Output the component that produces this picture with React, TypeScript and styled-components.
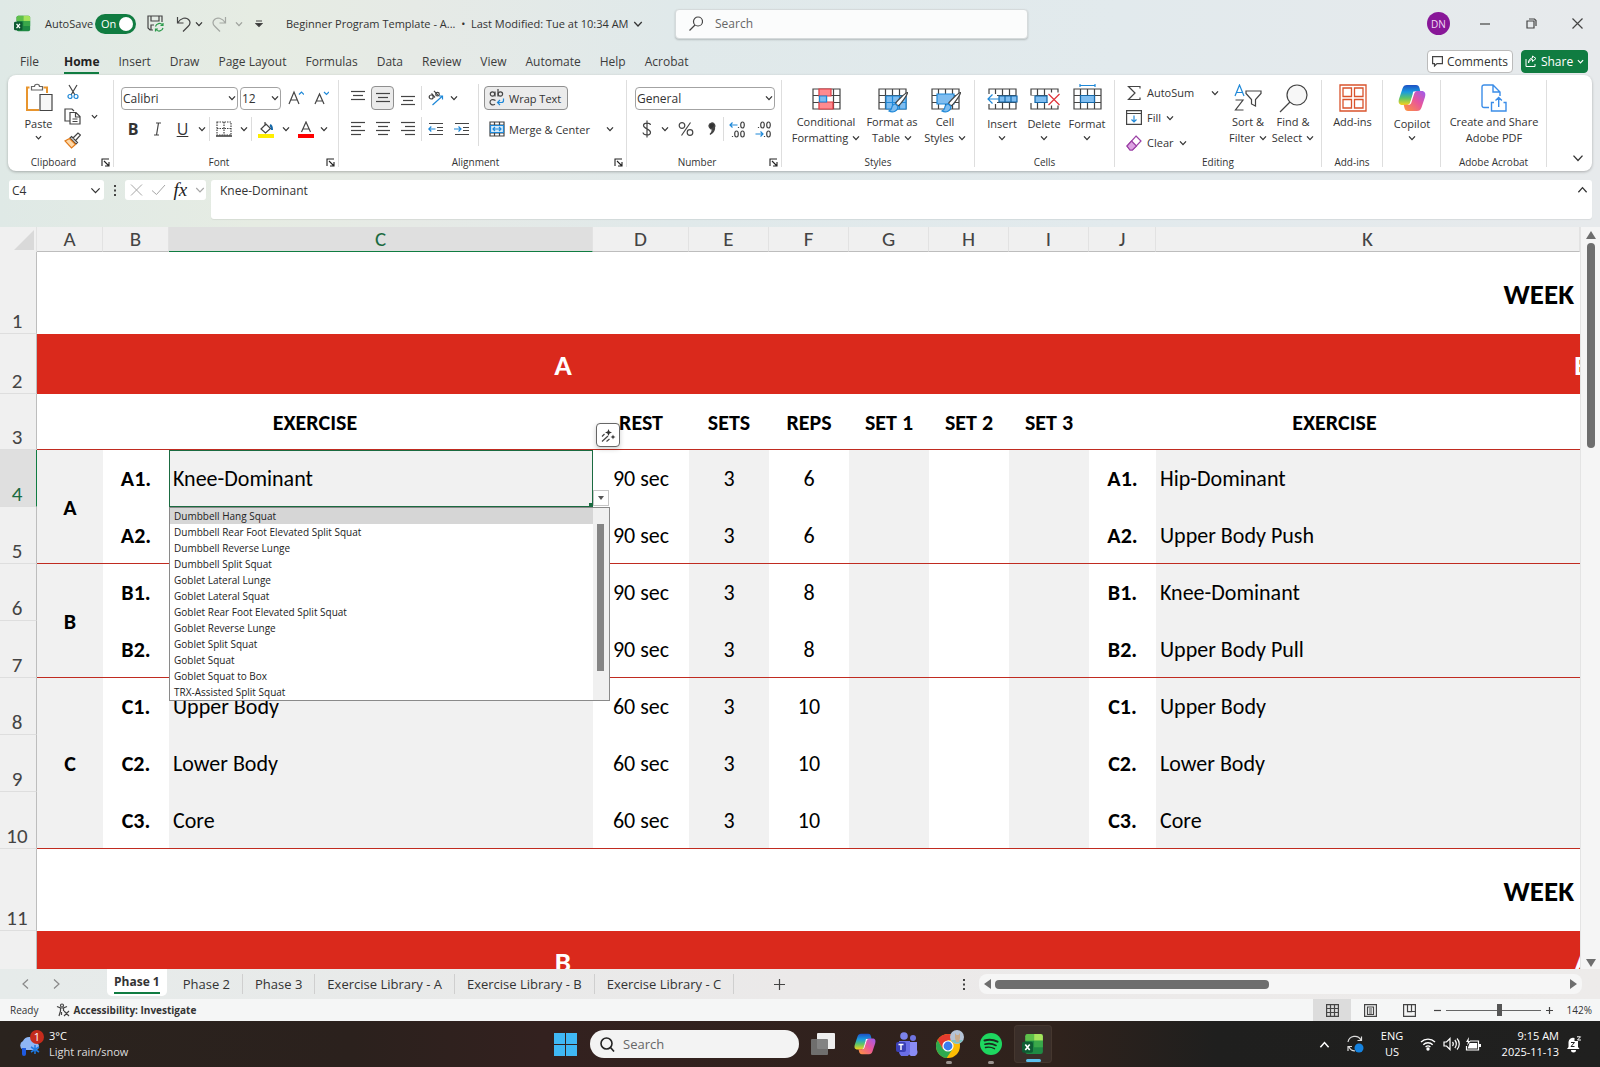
import React from "react";
import styled, { createGlobalStyle, css } from "styled-components";

const ui = `"Open Sans", "Noto Sans", sans-serif`;
const sheet = `"Carlito", "Lato", sans-serif`;
const green = "#107c41";
const ink = "#333";
const blue = "#1e88d8";

const Global = createGlobalStyle`
  * { box-sizing: border-box; }
  body { margin: 0; font-family: ${ui}; color: ${ink}; overflow: hidden; }
  button, input, select { font: inherit; color: inherit; margin: 0; padding: 0; border: 0; background: none; }
  button { cursor: pointer; }
  svg { display: block; flex: none; }
`;

const Page = styled.div`
  display: flex;
  flex-direction: column;
  height: 100vh;
  background: linear-gradient(90deg, #dfe9e6, #e6ece3 16%, #e6eae6 26%, #e0e9ea 42%, #e2eaed 70%, #e7eaec);
`;

/* Shared pieces */

const IconButton = styled.button<{ $w: number; $h?: number; $on?: boolean; $faded?: boolean }>`
  flex: none;
  display: flex;
  align-items: center;
  justify-content: center;
  width: ${(p) => p.$w}px;
  height: ${(p) => p.$h ?? 24}px;
  opacity: ${(p) => (p.$faded ? 0.4 : 1)};
  ${(p) => p.$on && css`
    background: #ebebeb;
    border: 1px solid #8f8f8f;
    border-radius: 4px;
  `}
`;

const Chevron = ({ size = 8, up = false, width = 1.3 }: { size?: number; up?: boolean; width?: number }) => (
  <svg width={size} height={size} viewBox="0 0 8 8" fill="none" stroke="currentColor" strokeWidth={width}>
    <path d={up ? "M1 6 L4 2.6 L7 6" : "M1 2.4 L4 5.6 L7 2.4"} />
  </svg>
);

const Icon = ({ w, h, vb, children }: { w: number; h: number; vb?: string; children: React.ReactNode }) => (
  <svg width={w} height={h} viewBox={vb ?? `0 0 ${w} ${h}`} fill="none" stroke="#444" strokeWidth="1.2">
    {children}
  </svg>
);

const ExcelLogo = ({ size }: { size: number }) => (
  <svg width={size} height={size} viewBox="0 0 20 20">
    <rect x="3" y="1" width="16" height="18" rx="2" fill="#1f8a43" />
    <path d="M5 1h6v6H3V3a2 2 0 0 1 2-2z" fill="#5fc04b" />
    <path d="M11 1h6a2 2 0 0 1 2 2v4h-8z" fill="#a5e35c" />
    <rect x="11" y="7" width="8" height="6" fill="#3aa84a" />
    <rect x="0" y="8" width="10" height="10" rx="1.6" fill="#0e5c33" />
    <path d="M3 10.5l4 5M7 10.5l-4 5" stroke="#fff" strokeWidth="1.5" />
  </svg>
);

const CopilotLogo = ({ size, id }: { size: number; id: string }) => (
  <svg width={size} height={size} viewBox="0 0 28 28">
    <defs>
      <linearGradient id={id + "a"} x1="0" y1="0" x2="0" y2="1">
        <stop offset="0" stopColor="#1d4fc4" />
        <stop offset=".35" stopColor="#1a9be0" />
        <stop offset=".65" stopColor="#5cc46a" />
        <stop offset="1" stopColor="#f7d31c" />
      </linearGradient>
      <linearGradient id={id + "b"} x1="1" y1="0" x2="0" y2="1">
        <stop offset="0" stopColor="#9a5cf0" />
        <stop offset=".45" stopColor="#e8559c" />
        <stop offset="1" stopColor="#ff9838" />
      </linearGradient>
    </defs>
    <path d="M9 1h9c2 0 3 1 3.500 3l.8 3.200h-3.500c-2 0-3 .8-3.600 2.800l-2.700 8.500c-.6 1.800-1.600 2.500-3.400 2.500H4.500C1 21 0 18.500 1 15L4.500 4.500C5.300 2 6.600 1 9 1z" fill={`url(#${id}a)`} />
    <path d="M19 27h-9c-2 0-3-1-3.500-3l-.8-3.200h3.500c2 0 3-.8 3.600-2.800l2.700-8.500c.6-1.800 1.600-2.500 3.400-2.500h4.600c3.500 0 4.500 2.500 3.500 6L23.500 23.500c-.8 2.500-2.100 3.500-4.500 3.500z" fill={`url(#${id}b)`} />
    <path d="M15.500 7.500h3.200c-1.500.2-2.100 1-2.600 2.500l-2.700 8.500c-.5 1.500-1.100 2-2.400 2.200H9.500c1.600-.2 2.200-1 2.700-2.400l2.300-7.500c.4-1.400.2-2.600 1-3.300z" fill="#fff" />
  </svg>
);

/* Title bar */

const TitleBar = styled.header`
  flex: none;
  display: flex;
  align-items: center;
  height: 47px;
  padding: 0 0 0 14px;
  font-size: 12px;
`;
const TitleLeft = styled.div`
  display: flex;
  align-items: center;
  flex: 0 0 661px;
`;
const AutoSave = styled.label`
  display: flex;
  align-items: center;
  justify-content: space-between;
  width: 91px;
  margin: 0 2px 0 14px;
  font-size: 11px;
`;
const Toggle = styled.span`
  position: relative;
  display: flex;
  align-items: center;
  width: 41px;
  height: 20px;
  padding-left: 6px;
  border-radius: 10px;
  background: ${green};
  color: #fff;
  input { position: absolute; inset: 0; opacity: 0; width: 100%; height: 100%; }
  &::after {
    content: "";
    position: absolute;
    right: 3px;
    width: 14px;
    height: 14px;
    border-radius: 50%;
    background: #fff;
  }
`;
const DocTitle = styled.button`
  display: flex;
  align-items: center;
  gap: 4px;
  margin-left: 13px;
  white-space: pre;
  font-size: 11px;
`;
const SearchBox = styled.label`
  display: flex;
  align-items: center;
  gap: 12px;
  flex: 0 1 353px;
  height: 30px;
  padding: 0 13px;
  border: 1px solid #d5dadb;
  border-radius: 4px;
  background: #fbfcfc;
  box-shadow: 0 1px 2px #0003;
  input { flex: 1; min-width: 0; outline: 0; font-size: 12px; }
  input::placeholder { color: #666; opacity: 1; }
`;
const WindowControls = styled.div`
  display: flex;
  align-items: center;
  margin-left: auto;
`;
const Avatar = styled.button`
  width: 23px;
  height: 23px;
  margin-right: 12px;
  border-radius: 50%;
  background: #881798;
  color: #f0d8f4;
  font-size: 10px;
`;

/* Tabs */

const TabBar = styled.nav`
  flex: none;
  display: flex;
  align-items: center;
  height: 28px;
  padding: 0 12px 0 20px;
`;
const Tab = styled.button<{ $active?: boolean }>`
  height: 26px;
  margin-right: 19px;
  padding-top: 2px;
  border-bottom: 2px solid ${(p) => (p.$active ? green : "transparent")};
  font-size: 12px;
  font-weight: ${(p) => (p.$active ? 700 : 400)};
  color: ${(p) => (p.$active ? "#222" : "#3c3c3c")};
  white-space: nowrap;
  &:first-child { margin-right: 25px; }
`;
const PillButton = styled.button<{ $primary?: boolean }>`
  display: flex;
  align-items: center;
  justify-content: center;
  gap: 4px;
  height: 23px;
  width: ${(p) => (p.$primary ? 67 : 86)}px;
  border: 1px solid ${(p) => (p.$primary ? green : "#bbb")};
  border-radius: 4px;
  background: ${(p) => (p.$primary ? green : "#fff")};
  color: ${(p) => (p.$primary ? "#fff" : ink)};
  font-size: 12px;
`;
const TabActions = styled.div`
  display: flex;
  gap: 8px;
  margin-left: auto;
`;

/* Ribbon */

const Ribbon = styled.section`
  flex: none;
  display: flex;
  height: 96px;
  margin: 0 8px;
  border-radius: 8px;
  background: #fff;
  box-shadow: 0 1px 3px #0004;
`;
const Group = styled.div<{ $w: number }>`
  flex: none;
  display: flex;
  flex-direction: column;
  justify-content: space-between;
  width: ${(p) => p.$w}px;
  margin: 5px 0 4px;
  border-right: 1px solid #dedede;
`;
const GroupBody = styled.div<{ $pad?: number }>`
  display: flex;
  height: 68px;
  padding-left: ${(p) => p.$pad ?? 0}px;
`;
const GroupLabel = styled.div<{ $launch?: boolean }>`
  display: grid;
  grid-template-columns: ${(p) => (p.$launch ? "1fr 14px" : "1fr")};
  align-items: center;
  height: 12px;
  font-size: 10px;
  text-align: center;
  white-space: nowrap;
  button { justify-self: end; margin-right: 3px; }
`;
const Stack = styled.div`
  display: flex;
  flex-direction: column;
  padding-top: 6px;
  gap: 7px;
`;
const Tight = styled.div`
  display: flex;
  flex-direction: column;
`;
const Row = styled.div`
  display: flex;
  align-items: center;
  height: 24px;
`;
const Bar = styled.span<{ $tall?: boolean }>`
  flex: none;
  width: 1px;
  height: ${(p) => (p.$tall ? 62 : 24)}px;
  margin: ${(p) => (p.$tall ? "4px 5px 0 4px" : "0")};
  background: #dcdcdc;
`;
const Combo = styled.label<{ $w: number }>`
  flex: none;
  display: grid;
  align-items: center;
  width: ${(p) => p.$w}px;
  height: 23px;
  margin-right: 2px;
  border: 1px solid #a3a3a3;
  border-radius: 4px;
  font-size: 12px;
  select { grid-area: 1 / 1; width: 100%; height: 21px; padding-left: 1px; appearance: none; outline: 0; }
  svg { grid-area: 1 / 1; justify-self: end; margin-right: 1px; pointer-events: none; }
`;
const WideButton = styled.button<{ $on?: boolean }>`
  display: flex;
  align-items: center;
  gap: 4px;
  height: 24px;
  padding: 0 6px 0 4px;
  border: 1px solid ${(p) => (p.$on ? "#8f8f8f" : "transparent")};
  border-radius: 4px;
  background: ${(p) => (p.$on ? "#ebebeb" : "none")};
  font-size: 11px;
  white-space: nowrap;
`;
const BigButton = styled.button<{ $w: number; $drop?: boolean }>`
  flex: none;
  display: flex;
  flex-direction: column;
  align-items: center;
  gap: ${(p) => (p.$drop ? 2 : 0)}px;
  width: ${(p) => p.$w}px;
  padding-top: 3px;
  font-size: 11px;
  line-height: 16px;
  white-space: nowrap;
`;
const BigIcon = styled.span`
  display: grid;
  place-items: center;
  height: 30px;
  margin-bottom: 1px;
`;
const Line = styled.span`
  display: flex;
  align-items: center;
  gap: 4px;
  height: 16px;
`;
const SmallButton = styled.button`
  flex: none;
  display: flex;
  align-items: center;
  gap: 5px;
  width: 112px;
  height: 25px;
  padding-left: 11px;
  font-size: 11px;
`;
const Push = styled.span`
  margin-left: auto;
  margin-right: 8px;
`;
const RibbonEnd = styled.div`
  flex: 1;
  display: flex;
  align-items: flex-end;
  justify-content: flex-end;
  padding: 0 6px 5px 0;
`;

const Launcher = () => (
  <svg width="9" height="9" viewBox="0 0 9 9" fill="none" stroke="#222" strokeWidth="1.1">
    <path d="M1 8V1h7M3 3l5 5M8 4v4H4" />
  </svg>
);

const Label = ({ text, launch }: { text: string; launch?: boolean }) => (
  <GroupLabel $launch={launch}>
    {text}
    {launch && <button aria-label={`${text} settings`}><Launcher /></button>}
  </GroupLabel>
);

const Lines = ({ ys, kind }: { ys: number[]; kind: "l" | "c" | "r" }) => (
  <Icon w={16} h={16}>
    {ys.map((y, i) => {
      const short = i % 2 === 1;
      const x1 = !short || kind === "l" ? 1 : kind === "c" ? 3 : 5;
      const x2 = !short || kind === "r" ? 15 : kind === "c" ? 13 : 11;
      return <path key={y} d={`M${x1} ${y}.5H${x2}`} />;
    })}
  </Icon>
);

const Indent = ({ right }: { right?: boolean }) => (
  <Icon w={16} h={16}>
    <path d="M1 2.500H15M9 6.500H15M9 9.500H15M1 13.500H15" />
    <path stroke={blue} d={right ? "M0 8H7M4.500 5.500L7 8L4.500 10.500" : "M7.500 8H.8M3.300 5.500L.8 8L3.300 10.500"} />
  </Icon>
);

const GridIcon = ({ children }: { children?: React.ReactNode }) => (
  <Icon w={31} h={29}>
    <path d="M2 5h27v20H2zM2 11.500h27M2 18.500h27M8.500 5v20M22.500 5v20M15.500 5v20" />
    {children}
  </Icon>
);

const Brush = () => (
  <>
    <path d="M30.500 8.500c-2 0-11 9-12 11l2.500 2.500c2-1 9.500-11 9.500-13.500z" fill="#fff" />
    <path d="M18.500 20c-3 0-3.500 2-4 4.500-.5 1.500-1.500 2-2.500 2.500 4 2 9 0 9-4.500z" fill="#7fbdf0" stroke={blue} />
  </>
);

/* Formula bar */

const FormulaRow = styled.div`
  flex: none;
  display: flex;
  align-items: flex-start;
  margin: 9px 8px 8px 9px;
  font-size: 12px;
`;
const NameBox = styled.label`
  display: flex;
  align-items: center;
  width: 95px;
  height: 20px;
  padding: 0 3px;
  background: #fff;
  border-radius: 3px;
  input { width: 78px; outline: 0; }
`;
const Dots = styled.span`
  display: grid;
  place-items: center;
  width: 21px;
  height: 20px;
`;
const FxBox = styled.div`
  display: flex;
  align-items: center;
  justify-content: space-between;
  width: 81px;
  height: 20px;
  margin-right: 5px;
  padding: 0 1px 0 5px;
  background: #fff;
  border-radius: 3px;
  color: #a6a6a6;
`;
const Fx = styled.button`
  font: italic 19px "Liberation Serif", serif;
  line-height: 18px;
  color: #222;
`;
const FormulaBox = styled.label`
  flex: 1;
  display: flex;
  justify-content: space-between;
  height: 39px;
  padding: 0 4px 0 9px;
  background: #fff;
  border-radius: 3px;
  box-shadow: 0 1px 1px #0001;
  input { flex: 1; height: 20px; outline: 0; font-size: 12px; }
  button { height: 18px; }
`;

/* Worksheet */

const Workspace = styled.main`
  flex: 1;
  min-height: 0;
  display: flex;
  background: #f0f0f0;
`;
const GridArea = styled.div`
  flex: 1;
  min-width: 0;
  overflow: hidden;
`;
const Table = styled.table`
  width: 100%;
  table-layout: fixed;
  border-collapse: separate;
  border-spacing: 0;
  font-family: ${sheet};
  font-size: 22px;
  line-height: 24px;
  color: #000;
  background: #fff;
`;
const ColHead = styled.th<{ $on?: boolean }>`
  height: 25px;
  padding: 0;
  font-size: 21px;
  font-weight: 400;
  color: ${(p) => (p.$on ? "#1b6b41" : "#444")};
  background: ${(p) => (p.$on ? "#dfdfdf" : "#f0f0f0")};
  border-right: 1px solid #e2e2e2;
  border-bottom: 1px solid ${(p) => (p.$on ? green : "#bdbdbd")};
`;
const Corner = styled.th`
  padding: 2px 2px 2px 14px;
  background: #f0f0f0;
  border-right: 1px solid #e2e2e2;
`;
const RowHead = styled.th<{ $on?: boolean }>`
  padding: 0 2px 0 0;
  vertical-align: bottom;
  font-size: 21px;
  font-weight: 400;
  color: ${(p) => (p.$on ? "#1b6b41" : "#444")};
  background: ${(p) => (p.$on ? "#dfdfdf" : "#f0f0f0")};
  border-right: 1px solid ${(p) => (p.$on ? green : "#bdbdbd")};
  border-bottom: 1px solid #dedede;
`;
const Tr = styled.tr<{ $h: number }>`
  height: ${(p) => p.$h}px;
`;
const Cell = styled.td<{ $gray?: boolean; $bold?: boolean; $left?: boolean; $line?: boolean }>`
  padding: ${(p) => (p.$line ? "2px 4px 0" : "1px 4px 0")};
  text-align: ${(p) => (p.$left ? "left" : "center")};
  font-weight: ${(p) => (p.$bold ? 700 : 400)};
  background: ${(p) => (p.$gray ? "#f1f1f1" : "#fff")};
  border-bottom: ${(p) => (p.$line ? "1px solid #c02b20" : "0")};
  white-space: nowrap;
`;
const WeekCell = styled(Cell)`
  padding-right: 6px;
  text-align: right;
  font-size: 29px;
  font-weight: 700;
`;
const Banner = styled.td`
  padding: 2px 0 0;
  background: #da291c;
  color: #fff;
  font-size: 29px;
  font-weight: 700;
  text-align: center;
`;
const Clipped = styled.div`
  width: 6px;
  margin-left: auto;
  overflow: hidden;
`;
const ActiveCell = styled(Cell)`
  position: relative;
  border: 1px solid #1b6b41;
  padding: 0 4px 0 3px;
`;
const FillHandle = styled.span`
  position: absolute;
  right: -1px;
  bottom: -1px;
  width: 4px;
  height: 4px;
  background: #1b6b41;
`;
const SuggestButton = styled.button`
  position: absolute;
  top: -28px;
  right: -28px;
  display: grid;
  place-items: center;
  width: 24px;
  height: 24px;
  background: #fff;
  border: 1px solid #666;
  border-radius: 4px;
  box-shadow: 0 2px 5px #0003;
`;
const DropButton = styled.button`
  position: absolute;
  right: -17px;
  bottom: 0;
  display: grid;
  place-items: center;
  width: 16px;
  height: 16px;
  background: #fff;
  border: 1px solid #c6c6c6;
`;
const DropList = styled.div`
  position: absolute;
  z-index: 2;
  top: 56px;
  left: -1px;
  right: -18px;
  display: flex;
  height: 194px;
  background: #fff;
  border: 1px solid #8a8a8a;
  ul { flex: 1; margin: 0; padding: 0; list-style: none; overflow: hidden; }
`;
const DropItem = styled.li<{ $on?: boolean }>`
  height: 16px;
  padding-left: 4px;
  font: 10px ${ui};
  line-height: 16px;
  color: #222;
  background: ${(p) => (p.$on ? "#d6d6d6" : "none")};
`;
const DropScroll = styled.div`
  width: 16px;
  padding: 16px 4px 29px;
  background: #f0f0f0;
  &::before { content: ""; display: block; height: 100%; width: 7px; background: #858585; }
`;
const VScroll = styled.div`
  display: flex;
  flex-direction: column;
  align-items: center;
  flex: none;
  width: 20px;
  padding: 4px 0 2px;
  background: #f5f5f5;
  border-left: 1px solid #e4e4e4;
`;
const VThumb = styled.div`
  width: 8px;
  height: 205px;
  margin: 4px 0 auto;
  border-radius: 4px;
  background: #6e6e6e;
`;

/* Sheet tabs */

const SheetBar = styled.div`
  flex: none;
  display: flex;
  align-items: center;
  height: 30px;
  padding-right: 18px;
  background: linear-gradient(90deg, #e6ebea, #ebe9e9 50%, #edebea);
`;
const SheetNav = styled.div`
  display: flex;
  width: 107px;
  padding-left: 10px;
`;
const SheetTab = styled.button<{ $active?: boolean }>`
  height: 20px;
  padding: 0 12px;
  border-right: 1px solid #cfcfcf;
  font-size: 13px;
  line-height: 20px;
  white-space: nowrap;
  ${(p) => p.$active && css`
    align-self: flex-start;
    height: 27px;
    margin-right: 4px;
    padding: 0 7px;
    border: 0;
    border-radius: 0 0 5px 5px;
    background: #fff;
    font-size: 12px;
    font-weight: 700;
    span { display: block; border-bottom: 2px solid ${green}; }
  `}
`;
const HScroll = styled.div`
  display: flex;
  align-items: center;
  justify-content: space-between;
  width: 603px;
  height: 20px;
  padding: 0 5px;
  border-radius: 8px;
  background: #f6f6f6;
`;
const HThumb = styled.div`
  width: 274px;
  height: 9px;
  margin: 0 auto 0 4px;
  border-radius: 4px;
  background: #6e6e6e;
`;

/* Status bar */

const StatusBar = styled.div`
  flex: none;
  display: flex;
  align-items: center;
  height: 22px;
  padding: 0 8px 0 10px;
  background: #f5f6f6;
  font-size: 10px;
`;
const Access = styled.button`
  display: flex;
  align-items: center;
  gap: 3px;
  margin-left: 18px;
  font-weight: 700;
`;
const PushRight = styled.div<{ $gap?: number }>`
  display: flex;
  margin-left: auto;
  padding-right: ${(p) => p.$gap ?? 0}px;
`;
const ViewButton = styled(IconButton)`
  height: 22px;
  background: #dcdcdc;
`;
const Zoom = styled.input`
  appearance: none;
  width: 95px;
  height: 12px;
  background: linear-gradient(#666, #666) center / 100% 1px no-repeat;
  &::-webkit-slider-thumb { appearance: none; width: 5px; height: 12px; background: #555; }
`;
const Percent = styled.span`
  width: 34px;
  text-align: right;
`;

/* Taskbar */

const Taskbar = styled.footer`
  flex: none;
  display: grid;
  grid-template-columns: 1fr auto 1fr;
  align-items: center;
  height: 46px;
  background: linear-gradient(90deg, #2a231e, #2b211d 22%, #33211f 34%, #2f221c 66%, #1f1f1e 76%, #20201f);
  color: #fff;
  font-size: 11px;
  line-height: 16px;
`;
const Weather = styled.button`
  display: flex;
  align-items: center;
  gap: 5px;
  margin-left: 17px;
  text-align: left;
  small { display: block; font-size: 11px; color: #ddd; }
`;
const Apps = styled.div`
  display: flex;
  align-items: center;
  padding-right: 4px;
`;
const TaskSearch = styled.label`
  display: flex;
  align-items: center;
  gap: 8px;
  width: 209px;
  height: 28px;
  margin: 0 3px 0 4px;
  padding: 0 10px;
  border-radius: 14px;
  background: #f3f3f3;
  color: #222;
  input { flex: 1; min-width: 0; outline: 0; font-size: 13px; }
  input::placeholder { color: #666; opacity: 1; }
`;
const TaskButton = styled.button<{ $mark?: "dot" | "line" }>`
  position: relative;
  display: grid;
  place-items: center;
  width: 42px;
  height: 42px;
  &::after {
    content: "";
    position: absolute;
    bottom: 1px;
    width: ${(p) => (p.$mark === "line" ? 15 : 6)}px;
    height: 3px;
    border-radius: 2px;
    background: ${(p) => (p.$mark === "line" ? "#5cc1ee" : p.$mark ? "#9a938f" : "transparent")};
  }
  ${(p) => p.$mark === "line" && css`
    width: 38px;
    margin-left: 2px;
    height: 38px;
    border-radius: 4px;
    background: #3a2e29;
    box-shadow: inset 0 0 0 1px #45372f;
  `}
`;
const Tray = styled.div`
  display: flex;
  align-items: center;
  justify-content: flex-end;
  padding-right: 17px;
  text-align: center;
`;
const Clock = styled.div`
  width: 74px;
  text-align: right;
  margin-right: 6px;
`;

const exercises = [
  "Dumbbell Hang Squat", "Dumbbell Rear Foot Elevated Split Squat", "Dumbbell Reverse Lunge",
  "Dumbbell Split Squat", "Goblet Lateral Lunge", "Goblet Lateral Squat",
  "Goblet Rear Foot Elevated Split Squat", "Goblet Reverse Lunge", "Goblet Split Squat",
  "Goblet Squat", "Goblet Squat to Box", "TRX-Assisted Split Squat",
];

type Exercise = { n: number; group?: [string, number]; code: string; left: string; rest: string; reps: number; right: string; last?: boolean };
const rows: Exercise[] = [
  { n: 4, group: ["A", 2], code: "A1.", left: "Knee-Dominant", rest: "90 sec", reps: 6, right: "Hip-Dominant" },
  { n: 5, code: "A2.", left: "", rest: "90 sec", reps: 6, right: "Upper Body Push", last: true },
  { n: 6, group: ["B", 2], code: "B1.", left: "", rest: "90 sec", reps: 8, right: "Knee-Dominant" },
  { n: 7, code: "B2.", left: "", rest: "90 sec", reps: 8, right: "Upper Body Pull", last: true },
  { n: 8, group: ["C", 3], code: "C1.", left: "Upper Body", rest: "60 sec", reps: 10, right: "Upper Body" },
  { n: 9, code: "C2.", left: "Lower Body", rest: "60 sec", reps: 10, right: "Lower Body" },
  { n: 10, code: "C3.", left: "Core", rest: "60 sec", reps: 10, right: "Core", last: true },
];
const columns = ["A", "B", "C", "D", "E", "F", "G", "H", "I", "J", "K"];
const widths = [37, 66, 66, 424, 96, 80, 80, 80, 80, 80, 67];
const tabs = ["File", "Home", "Insert", "Draw", "Page Layout", "Formulas", "Data", "Review", "View", "Automate", "Help", "Acrobat"];

function RibbonBar() {
  return (
    <Ribbon aria-label="Ribbon">
      <Group $w={106}>
        <GroupBody $pad={9}>
          <BigButton $w={43} $drop>
            <BigIcon>
              <Icon w={28} h={30}>
                <path d="M4.500 4.500H2V27H14M18.500 4.500H22V10" stroke="#e8952e" strokeWidth="2" />
                <path d="M6.500 7V3.500h3c0-3 5-3 5 0h3V7z" fill="#fff" stroke="#666" />
                <path d="M15 11.500h12v16H15z" fill="#f7f7f7" />
              </Icon>
            </BigIcon>
            <Line>Paste</Line>
            <Chevron size={7} />
          </BigButton>
          <Tight>
            <IconButton $w={25} aria-label="Cut">
              <Icon w={12} h={16}><path d="M2 1l6 10M10 1L4 11" /><g stroke={blue}><circle cx="3" cy="12.500" r="2" /><circle cx="9" cy="12.500" r="2" /></g></Icon>
            </IconButton>
            <IconButton $w={25} aria-label="Copy">
              <Icon w={17} h={17}><path d="M6 13H1V1h7l2 2" /><path d="M6 4.500h6l4 4V16H6zM11.500 4.500V9H16M8.500 11h5M8.500 13.500h5" fill="#fff" /></Icon>
            </IconButton>
            <IconButton $w={25} aria-label="Format Painter">
              <Icon w={17} h={17}><path d="M9 6l5-5 2.500 2L12 8M7.500 4.500l6 6-1.500 1.500-6-6z" fill="#fff" /><path d="M5.500 6.500L1 9l6.500 7 4-3.500z" fill="#ffd9a8" stroke="#e07b1c" /></Icon>
            </IconButton>
          </Tight>
          <IconButton $w={18} $h={72} aria-label="Copy options"><Chevron size={7} /></IconButton>
        </GroupBody>
        <Label text="Clipboard" launch />
      </Group>

      <Group $w={225}>
        <GroupBody $pad={7}>
          <Stack>
            <Row>
              <Combo $w={117}><select aria-label="Font"><option>Calibri</option></select><Chevron /></Combo>
              <Combo $w={41}><select aria-label="Font size"><option>12</option></select><Chevron /></Combo>
              <IconButton $w={25} aria-label="Increase font size"><Icon w={16} h={16}><path d="M1 14L6 2l5 12M3 10h6" /><path d="M11 4.500L13.500 2 16 4.500" stroke={blue} /></Icon></IconButton>
              <IconButton $w={25} aria-label="Decrease font size"><Icon w={16} h={16}><path d="M2 14L6.500 4 11 14M3.500 11h6" /><path d="M11 2l2.500 2.500L16 2" stroke={blue} /></Icon></IconButton>
            </Row>
            <Row>
              <IconButton $w={24} aria-label="Bold"><b>B</b></IconButton>
              <IconButton $w={25} aria-label="Italic"><Icon w={9} h={14}><path d="M3 1h5M1 13h5M5.500 1l-2 12" /></Icon></IconButton>
              <IconButton $w={25} aria-label="Underline"><u>U</u></IconButton>
              <IconButton $w={14} aria-label="Underline options"><Chevron /></IconButton>
              <Bar />
              <IconButton $w={27} aria-label="Borders"><Icon w={16} h={16}><path d="M1 1h14v13H1zM8 1v13M1 7.500h14" strokeDasharray="1.500 1" /><path d="M0 15H16" strokeWidth="1.600" /></Icon></IconButton>
              <IconButton $w={14} aria-label="Border options"><Chevron /></IconButton>
              <Bar />
              <IconButton $w={28} aria-label="Fill colour"><Icon w={16} h={17}><path d="M7 1v4M3 8l5-5 4.500 4.500-5 4.500z" /><path d="M12 4c2 1 2 2.500 2 5" stroke="#1467a8" strokeWidth="2" /><path d="M0 15H16" stroke="#ffee00" strokeWidth="4" /></Icon></IconButton>
              <IconButton $w={12} aria-label="Fill options"><Chevron /></IconButton>
              <IconButton $w={27} aria-label="Font colour"><Icon w={16} h={17}><path d="M3.500 11L8 1l4.500 10M5 8h6" /><path d="M0 15H16" stroke="#f00" strokeWidth="4" /></Icon></IconButton>
              <IconButton $w={10} aria-label="Font colour options"><Chevron /></IconButton>
            </Row>
          </Stack>
        </GroupBody>
        <Label text="Font" launch />
      </Group>

      <Group $w={288}>
        <GroupBody $pad={6}>
          <Stack>
            <Row>
              <IconButton $w={26} aria-label="Top align"><Lines ys={[1, 5, 9]} kind="c" /></IconButton>
              <IconButton $w={23} $on aria-label="Middle align"><Lines ys={[3, 7, 11]} kind="c" /></IconButton>
              <IconButton $w={27} aria-label="Bottom align"><Lines ys={[6, 10, 14]} kind="c" /></IconButton>
              <Bar />
              <IconButton $w={28} aria-label="Orientation">
                <Icon w={16} h={16}><circle cx="3.200" cy="7" r="2" /><path d="M3.500 3.500l3.500 4M6 .8l4.500 5" /><circle cx="9.500" cy="4.200" r="1.800" /><path d="M4.500 15L14.500 6M11 6h3.500v3.500" stroke={blue} /></Icon>
              </IconButton>
              <IconButton $w={8} aria-label="Orientation options"><Chevron /></IconButton>
            </Row>
            <Row>
              <IconButton $w={25} aria-label="Align left"><Lines ys={[1, 5, 9, 13]} kind="l" /></IconButton>
              <IconButton $w={25} aria-label="Align center"><Lines ys={[1, 5, 9, 13]} kind="c" /></IconButton>
              <IconButton $w={26} aria-label="Align right"><Lines ys={[1, 5, 9, 13]} kind="r" /></IconButton>
              <Bar />
              <IconButton $w={28} aria-label="Decrease indent"><Indent /></IconButton>
              <IconButton $w={24} aria-label="Increase indent"><Indent right /></IconButton>
            </Row>
          </Stack>
          <Bar $tall />
          <Stack>
            <Row><WideButton $on>
              <Icon w={16} h={18}><circle cx="3.500" cy="5" r="2.200" /><path d="M6 2.500v5M9 0v7.500M6.500 11.500c-3-2-5.500-.5-5.500 1.700s2.500 3.500 5 2" /><circle cx="11.400" cy="5" r="2.200" /><path d="M14.500 9.500v2c0 1.500-1 2-2 2H8.500M11 11l-2.500 2.500L11 16" stroke={blue} /></Icon>
              Wrap Text
            </WideButton></Row>
            <Row>
              <WideButton>
                <Icon w={16} h={16}><path d="M1 1h14v14H1zM1 4h14M1 12h14M5.500 1v3M10.500 1v3M5.500 12v3M10.500 12v3" /><path d="M1.500 4.500h13v7h-13z" fill="#d7ecfb" stroke={blue} /><path d="M4 8h8M6 6L4 8l2 2M10 6l2 2-2 2" stroke={blue} /></Icon>
                Merge &amp; Center
              </WideButton>
              <IconButton $w={26} aria-label="Merge options"><Chevron /></IconButton>
            </Row>
          </Stack>
        </GroupBody>
        <Label text="Alignment" launch />
      </Group>

      <Group $w={155}>
        <GroupBody $pad={8}>
          <Stack>
            <Row><Combo $w={140}><select aria-label="Number format"><option>General</option></select><Chevron /></Combo></Row>
            <Row>
              <IconButton $w={23} aria-label="Currency"><Icon w={10} h={18}><path d="M8.500 5C8 2.500 1.500 2.200 1.500 5.500S8.500 9 8.500 12.500 1.500 15.500 1 12.500M5 .5v17" /></Icon></IconButton>
              <IconButton $w={14} aria-label="Currency options"><Chevron /></IconButton>
              <IconButton $w={28} aria-label="Percent"><Icon w={16} h={16}><circle cx="4" cy="4.500" r="2.800" /><circle cx="12" cy="11.500" r="2.800" /><path d="M12.500 1.500L3.500 14.500" /></Icon></IconButton>
              <IconButton $w={23} aria-label="Comma"><Icon w={9} h={14}><path d="M4.500 1a3 3 0 1 1-1 5.600 3 3 0 0 1 1-5.600zM7.500 4c.5 4-1.500 7-4.500 8.500 2-2 2.500-4 2.500-6z" fill="#333" /></Icon></IconButton>
              <Bar />
              {[false, true].map((dec) => (
                <IconButton key={String(dec)} $w={26} aria-label={dec ? "Decrease decimal" : "Increase decimal"}>
                  <Icon w={16} h={17}>
                    {dec
                      ? <><ellipse cx="7.500" cy="4" rx="1.800" ry="3" /><ellipse cx="13.500" cy="4" rx="1.800" ry="3" /><ellipse cx="13.500" cy="13" rx="1.800" ry="3" /><path d="M3.500 6v1M9.500 15v1" /><path d="M.5 13H8M5.500 10.500L8 13l-2.500 2.500" stroke={blue} /></>
                      : <><ellipse cx="13.500" cy="4" rx="1.800" ry="3" /><ellipse cx="7.500" cy="13" rx="1.800" ry="3" /><ellipse cx="13.500" cy="13" rx="1.800" ry="3" /><path d="M9.500 6v1M3.500 15v1" /><path d="M8.500 4H1M3.500 1.500L1 4l2.500 2.500" stroke={blue} /></>}
                  </Icon>
                </IconButton>
              ))}
            </Row>
          </Stack>
        </GroupBody>
        <Label text="Number" launch />
      </Group>

      <Group $w={193}>
        <GroupBody $pad={7}>
          <BigButton $w={74}>
            <BigIcon><GridIcon><path d="M8 5h12v7H8zM8 18h14v7H8z" fill="#ff8a8f" stroke="#e03c44" /><path d="M8.500 12h7v6h-7z" fill="#7fbdf0" stroke={blue} /></GridIcon></BigIcon>
            <Line>Conditional</Line><Line>Formatting <Chevron /></Line>
          </BigButton>
          <BigButton $w={58}>
            <BigIcon><GridIcon><path d="M9 12h20v13H9z" fill="#7fbdf0" stroke={blue} /><path d="M15.500 12v13M22.500 12v13M9 18.500h20" stroke={blue} /><Brush /></GridIcon></BigIcon>
            <Line>Format as</Line><Line>Table <Chevron /></Line>
          </BigButton>
          <BigButton $w={48}>
            <BigIcon><GridIcon><path d="M7 10h17v10H7z" fill="#7fbdf0" stroke={blue} /><Brush /></GridIcon></BigIcon>
            <Line>Cell</Line><Line>Styles <Chevron /></Line>
          </BigButton>
        </GroupBody>
        <Label text="Styles" />
      </Group>

      <Group $w={140}>
        <GroupBody $pad={6}>
          <BigButton $w={42} $drop>
            <BigIcon><GridIcon><path d="M12 12h18v6H12zM18 12v6M24 12v6" fill="#7fbdf0" stroke="#1467a8" /><path d="M0 10h10v10H0z" fill="#fff" stroke="none" /><path d="M12 15H1M5.500 10.500L1 15l4.500 4.500" stroke={blue} /></GridIcon></BigIcon>
            <Line>Insert</Line><Chevron />
          </BigButton>
          <BigButton $w={42} $drop>
            <BigIcon><GridIcon><path d="M1 12h5v6.500H1zM19 9h12v12H19z" fill="#fff" stroke="#fff" /><path d="M6 12h12v6.500H6z" fill="#7fbdf0" stroke="#1467a8" /><path d="M19.500 10l11 11M30.500 10l-11 11" stroke="#e0353b" /></GridIcon></BigIcon>
            <Line>Delete</Line><Chevron />
          </BigButton>
          <BigButton $w={44} $drop>
            <BigIcon><GridIcon><path d="M8.500 11.500h14v7h-14z" fill="#7fbdf0" stroke="#1467a8" /><path d="M8 1.500h15M8 0v3M23 0v3" stroke={blue} /></GridIcon></BigIcon>
            <Line>Format</Line><Chevron />
          </BigButton>
        </GroupBody>
        <Label text="Cells" />
      </Group>

      <Group $w={207}>
        <GroupBody>
          <Tight>
            <SmallButton>
              <Icon w={16} h={16}><path d="M14 3.500V1.500H2.500L9 8l-6.500 6.500H14v-2" /></Icon>AutoSum<Push><Chevron /></Push>
            </SmallButton>
            <SmallButton>
              <Icon w={16} h={15}><path d="M.6.600h14.800v13.800H.6zM.6 3.500h14.800" /><path d="M8 5.500v6.500M5.500 9.500L8 12l2.500-2.500" stroke={blue} /></Icon>Fill<Chevron />
            </SmallButton>
            <SmallButton>
              <Icon w={16} h={16}><path d="M10 1l5 5-8.500 9H4L1 11z" stroke="#9b3fa5" /><path d="M5.500 6L10.500 11 6.500 15H4L1 11z" fill="#dca3e2" stroke="#9b3fa5" /></Icon>Clear<Chevron />
            </SmallButton>
          </Tight>
          <BigButton $w={42}>
            <BigIcon><Icon w={29} h={28}><path d="M1 12L5.500 1 10 12M2.500 8.500h6" stroke={blue} /><path d="M1.500 16h7.500L1.500 26h8M12 7h15v2.500l-5.500 6V22l-4-2v-4.500L12 9.500z" /></Icon></BigIcon>
            <Line>Sort &amp;</Line><Line>Filter <Chevron /></Line>
          </BigButton>
          <BigButton $w={48}>
            <BigIcon><Icon w={29} h={29}><circle cx="18" cy="11" r="10" fill="#f7f7f7" /><path d="M11 18L1 28" /></Icon></BigIcon>
            <Line>Find &amp;</Line><Line>Select <Chevron /></Line>
          </BigButton>
        </GroupBody>
        <Label text="Editing" />
      </Group>

      <Group $w={61}>
        <GroupBody>
          <BigButton $w={61}>
            <BigIcon><Icon w={28} h={28}><g stroke="#d9532c" strokeWidth="1.300"><path d="M1 1h26v26H1zM4 4h8.500v8.500H4zM15.500 4H24v8.500h-8.500zM4 15.500h8.500V24H4zM15.500 15.500H24V24h-8.500z" /></g></Icon></BigIcon>
            <Line>Add-ins</Line>
          </BigButton>
        </GroupBody>
        <Label text="Add-ins" />
      </Group>

      <Group $w={58}>
        <GroupBody>
          <BigButton $w={58} $drop>
            <BigIcon><CopilotLogo size={28} id="ribbon" /></BigIcon>
            <Line>Copilot</Line><Chevron />
          </BigButton>
        </GroupBody>
      </Group>

      <Group $w={106}>
        <GroupBody>
          <BigButton $w={106}>
            <BigIcon><Icon w={26} h={28}><g stroke="#3b8de8" strokeWidth="1.400"><path d="M8 23.500H3A2 2 0 0 1 1 21.500V3a2 2 0 0 1 2-2h9l7 7v4M12 1v7h7" /><path d="M13 18.500h-2.500V27H25v-8.500h-2.500M17.700 23V13.500M14.500 16.500l3.200-3 3.200 3" /></g></Icon></BigIcon>
            <Line>Create and Share</Line><Line>Adobe PDF</Line>
          </BigButton>
        </GroupBody>
        <Label text="Adobe Acrobat" />
      </Group>
      <RibbonEnd><IconButton $w={16} $h={16} aria-label="Collapse ribbon"><Chevron size={12} width={0.9} /></IconButton></RibbonEnd>
    </Ribbon>
  );
}

function Worksheet() {
  return (
    <Workspace>
      <GridArea>
        <Table>
          <colgroup>{widths.map((w, i) => <col key={i} style={{ width: w }} />)}<col /></colgroup>
          <thead>
            <tr>
              <Corner aria-label="Select all"><svg width="20" height="20" viewBox="0 0 20 20"><path d="M20 0V20H0z" fill="#d9d9d9" /></svg></Corner>
              {columns.map((c) => <ColHead key={c} $on={c === "C"}>{c}</ColHead>)}
            </tr>
          </thead>
          <tbody>
            <Tr $h={82}><RowHead>1</RowHead><WeekCell colSpan={11}>WEEK</WeekCell></Tr>
            <Tr $h={60}><RowHead>2</RowHead><Banner colSpan={9}>A</Banner><Banner colSpan={2}><Clipped>B</Clipped></Banner></Tr>
            <Tr $h={56}>
              <RowHead>3</RowHead>
              <Cell colSpan={3} $bold $line>EXERCISE</Cell>
              {["REST", "SETS", "REPS", "SET 1", "SET 2", "SET 3"].map((t) => <Cell key={t} $bold $line>{t}</Cell>)}
              <Cell colSpan={2} $bold $line>EXERCISE</Cell>
            </Tr>
            {rows.map((r) => (
              <Tr key={r.n} $h={57}>
                <RowHead $on={r.n === 4}>{r.n}</RowHead>
                {r.group && <Cell rowSpan={r.group[1]} $bold $gray $line>{r.group[0]}</Cell>}
                <Cell $bold $line={r.last}>{r.code}</Cell>
                {r.n === 4 ? (
                  <ActiveCell $left $gray>
                    {r.left}
                    <FillHandle />
                    <SuggestButton aria-label="Suggestions">
                      <Icon w={15} h={15}><path d="M7.500 1l1 2.500L11 4.500 8.500 5.500 7.500 8l-1-2.500L4 4.500l2.500-1zM12 6.500l.7 1.800 1.800.7-1.800.7-.7 1.800-.7-1.800L9.500 9l1.800-.7z" fill="#333" stroke="none" /><path d="M1 8.500L3.500 6M1 13.500L7 8M5.500 13.500L8.500 11" /></Icon>
                    </SuggestButton>
                    <DropButton aria-label="Show list"><svg width="6" height="4" viewBox="0 0 6 4"><path d="M0 0h6L3 4z" fill="#555" /></svg></DropButton>
                    <DropList>
                      <ul>{exercises.map((e, i) => <DropItem key={e} $on={i === 0}>{e}</DropItem>)}</ul>
                      <DropScroll />
                    </DropList>
                  </ActiveCell>
                ) : <Cell $left $gray $line={r.last}>{r.left}</Cell>}
                <Cell $line={r.last}>{r.rest}</Cell>
                <Cell $gray $line={r.last}>3</Cell>
                <Cell $line={r.last}>{r.reps}</Cell>
                <Cell $gray $line={r.last} />
                <Cell $line={r.last} />
                <Cell $gray $line={r.last} />
                <Cell $bold $line={r.last}>{r.code}</Cell>
                <Cell $left $gray $line={r.last}>{r.right}</Cell>
              </Tr>
            ))}
            <Tr $h={82}><RowHead>11</RowHead><WeekCell colSpan={11}>WEEK</WeekCell></Tr>
            <Tr $h={60}><RowHead /><Banner colSpan={9}>B</Banner><Banner colSpan={2}><Clipped>A</Clipped></Banner></Tr>
          </tbody>
        </Table>
      </GridArea>
      <VScroll>
        <svg width="10" height="8" viewBox="0 0 10 8"><path d="M5 0l5 8H0z" fill="#6e6e6e" /></svg>
        <VThumb />
        <svg width="10" height="8" viewBox="0 0 10 8"><path d="M5 8L0 0h10z" fill="#6e6e6e" /></svg>
      </VScroll>
    </Workspace>
  );
}

export default function App() {
  return (
    <Page>
      <Global />
      <TitleBar>
        <TitleLeft>
          <ExcelLogo size={17} />
          <AutoSave>AutoSave<Toggle>On<input type="checkbox" defaultChecked /></Toggle></AutoSave>
          <IconButton $w={35} aria-label="Save">
            <Icon w={17} h={17}><path d="M6 15H3L1 13V1h14v6M4 1v5h8V1M4 15V10h3" /><g stroke="#2a9a4a"><path d="M8.500 11.500a4 4 0 0 1 7-1.500M16 8v2.500h-2.500M16 13a4 4 0 0 1-7 1.500M8.500 16.500V14H11" /></g></Icon>
          </IconButton>
          <IconButton $w={20} aria-label="Undo"><Icon w={15} h={16}><path d="M1.500 1v6h6M1.500 7C5 1.500 10 1 12.500 3.500s1.500 5-.5 7L7 15.500" /></Icon></IconButton>
          <IconButton $w={12} aria-label="Undo history"><Chevron /></IconButton>
          <IconButton $w={28} $faded aria-label="Redo"><Icon w={15} h={16}><path d="M13.500 1v6h-6M13.500 7C10 1.500 5 1 2.500 3.500s-1.500 5 .5 7L8 15.500" /></Icon></IconButton>
          <IconButton $w={12} $faded aria-label="Redo history"><Chevron /></IconButton>
          <IconButton $w={28} aria-label="Customize toolbar"><Icon w={8} h={8}><path d="M1 1h6M1 3.500L4 6.500 7 3.500z" fill="#333" /></Icon></IconButton>
          <DocTitle>Beginner Program Template - A...  •  Last Modified: Tue at 10:34 AM<Chevron size={10} width={1} /></DocTitle>
        </TitleLeft>
        <SearchBox>
          <Icon w={14} h={15}><circle cx="9" cy="5.500" r="4.500" /><path d="M6 9L.5 14.500" /></Icon>
          <input type="search" placeholder="Search" aria-label="Search" />
        </SearchBox>
        <WindowControls>
          <Avatar>DN</Avatar>
          <IconButton $w={46} aria-label="Minimize"><Icon w={10} h={10}><path d="M0 5H10" /></Icon></IconButton>
          <IconButton $w={46} aria-label="Restore"><Icon w={11} h={11}><path d="M1 3h7v7H1zM3 1h5.500L10 2.500V8" /></Icon></IconButton>
          <IconButton $w={46} aria-label="Close"><Icon w={11} h={11}><path d="M.5.500l10 10M10.500.500l-10 10" /></Icon></IconButton>
        </WindowControls>
      </TitleBar>
      <TabBar>
        {tabs.map((t) => <Tab key={t} $active={t === "Home"}>{t}</Tab>)}
        <TabActions>
          <PillButton><Icon w={11} h={11}><path d="M.6.600h9.800v7H5L2.500 10V7.600H.6z" /></Icon>Comments</PillButton>
          <PillButton $primary>
            <svg width="12" height="12" viewBox="0 0 12 12" fill="none" stroke="#fff"><path d="M1 4v7.500h9V9M3.500 8c.5-2.500 2-3.500 4-3.500V6.500L11 3.500 7.500 1v2C5 3 3.500 5 3.500 8z" /></svg>
            Share<Chevron size={7} />
          </PillButton>
        </TabActions>
      </TabBar>
      <RibbonBar />
      <FormulaRow>
        <NameBox><input defaultValue="C4" aria-label="Name box" /><Chevron size={11} width={0.9} /></NameBox>
        <Dots><svg width="2" height="11" viewBox="0 0 2 11"><path d="M0 0h2v2H0zM0 4.500h2v2H0zM0 9h2v2H0z" fill="#444" /></svg></Dots>
        <FxBox>
          <button aria-label="Cancel"><svg width="13" height="12" viewBox="0 0 13 12" stroke="currentColor"><path d="M1 .500l11 11M12 .500l-11 11" /></svg></button>
          <button aria-label="Enter"><svg width="15" height="12" viewBox="0 0 15 12" fill="none" stroke="currentColor"><path d="M1 6.500l4.500 4L14 1" /></svg></button>
          <Fx aria-label="Insert function">fx</Fx>
          <Chevron size={10} width={0.9} />
        </FxBox>
        <FormulaBox><input defaultValue="Knee-Dominant" aria-label="Formula" /><button aria-label="Collapse formula bar"><Chevron up size={11} width={0.9} /></button></FormulaBox>
      </FormulaRow>
      <Worksheet />
      <SheetBar>
        <SheetNav>
          <IconButton $w={31} aria-label="Previous sheet"><Icon w={7} h={10}><path d="M6 .500L1 5l5 4.500" stroke="#888" /></Icon></IconButton>
          <IconButton $w={31} aria-label="Next sheet"><Icon w={7} h={10}><path d="M1 .500L6 5 1 9.500" stroke="#888" /></Icon></IconButton>
        </SheetNav>
        <SheetTab $active><span>Phase 1</span></SheetTab>
        {["Phase 2", "Phase 3", "Exercise Library - A", "Exercise Library - B", "Exercise Library - C"].map((t) => <SheetTab key={t}>{t}</SheetTab>)}
        <IconButton $w={90} aria-label="New sheet"><Icon w={11} h={11}><path d="M5.500 0v11M0 5.500h11" /></Icon></IconButton>
        <PushRight $gap={5}>
          <Dots><svg width="2" height="11" viewBox="0 0 2 11"><path d="M0 0h2v2H0zM0 4.500h2v2H0zM0 9h2v2H0z" fill="#444" /></svg></Dots>
        </PushRight>
        <HScroll>
          <svg width="7" height="10" viewBox="0 0 7 10"><path d="M0 5l7-5v10z" fill="#6e6e6e" /></svg>
          <HThumb />
          <svg width="7" height="10" viewBox="0 0 7 10"><path d="M7 5L0 0v10z" fill="#6e6e6e" /></svg>
        </HScroll>
      </SheetBar>
      <StatusBar>
        Ready
        <Access>
          <Icon w={14} h={14}><circle cx="6" cy="2.500" r="1.500" /><path d="M1 3.500l3.500 1.500v3L3 13M11 3.500L7.500 5v3M4.500 5h3M8 8l5 5M13 8l-5 5M5.500 9v3" /></Icon>
          Accessibility: Investigate
        </Access>
        <PushRight>
          <ViewButton $w={38} aria-label="Normal view"><Icon w={13} h={13}><path d="M.6.600h11.800v11.800H.6zM4.500.600v12M8.500.600v12M.6 4.500h12M.6 8.500h12" /></Icon></ViewButton>
          <IconButton $w={39} $h={22} aria-label="Page layout view"><Icon w={13} h={13}><path d="M.6.600h11.800v11.800H.6zM3.500 3h6v7.500h-6zM5 5h3M5 7h3M5 9h3" /></Icon></IconButton>
          <IconButton $w={39} $h={22} aria-label="Page break view"><Icon w={13} h={13}><path d="M.6.600h11.800v11.800H.6zM4.500.600v7h4v-7M4.500 7.500H12" /></Icon></IconButton>
        </PushRight>
        <IconButton $w={17} $h={22} aria-label="Zoom out"><Icon w={7} h={7}><path d="M0 3.500H7" /></Icon></IconButton>
        <Zoom type="range" min={0} max={100} defaultValue={57} aria-label="Zoom" />
        <IconButton $w={17} $h={22} aria-label="Zoom in"><Icon w={7} h={7}><path d="M0 3.500H7M3.500 0V7" /></Icon></IconButton>
        <Percent>142%</Percent>
      </StatusBar>
      <Taskbar>
        <Weather>
          <svg width="27" height="28" viewBox="0 0 27 28">
            <path d="M6 20a5 5 0 0 1 0-9 7 7 0 0 1 13 1 4.500 4.500 0 0 1 1 8z" fill="#8fb6f5" />
            <path d="M5 18h4v6a2 2 0 0 1-4 0z" fill="#1f5ae0" />
            <path d="M18 15v9M14 17l8 5M22 17l-8 5" stroke="#1f7ae0" strokeWidth="1.500" />
            <circle cx="20" cy="7" r="7" fill="#c42b1c" />
            <text x="20" y="11" textAnchor="middle" fontSize="11" fill="#fff">1</text>
          </svg>
          <span>3°C<small>Light rain/snow</small></span>
        </Weather>
        <Apps>
          <TaskButton aria-label="Start"><svg width="23" height="23" viewBox="0 0 23 23"><path d="M0 0h11v11H0zM12 0h11v11H12zM0 12h11v11H0zM12 12h11v11H12z" fill="#3fb8f5" /></svg></TaskButton>
          <TaskSearch>
            <svg width="15" height="15" viewBox="0 0 15 15" fill="none" stroke="#222" strokeWidth="1.600"><circle cx="6.500" cy="6.500" r="5.500" /><path d="M10.500 10.500L14 14.500" /></svg>
            <input type="search" placeholder="Search" aria-label="Taskbar search" />
          </TaskSearch>
          <TaskButton aria-label="Task view"><svg width="24" height="22" viewBox="0 0 24 22"><rect x="6" width="18" height="16" rx="1" fill="#eee" /><rect y="6" width="17" height="16" rx="1" fill="#777" opacity=".9" /></svg></TaskButton>
          <TaskButton aria-label="Copilot"><CopilotLogo size={22} id="task" /></TaskButton>
          <TaskButton aria-label="Teams">
            <svg width="22" height="24" viewBox="0 0 22 24"><circle cx="8" cy="4" r="3.800" fill="#7b83eb" /><circle cx="17" cy="6" r="3" fill="#6f74e0" /><path d="M13 10h8v8a4 4 0 0 1-8 4z" fill="#8a8cf5" /><path d="M3 9h11v10a4 4 0 0 1-11 1z" fill="#6a6ee6" /><rect y="10" width="10" height="10" rx="2" fill="#3a3fb5" /><path d="M2.500 12.500h5M5 12.500v5.500" stroke="#fff" strokeWidth="1.400" /></svg>
          </TaskButton>
          <TaskButton $mark="dot" aria-label="Chrome">
            <svg width="30" height="30" viewBox="0 0 30 30">
              <circle cx="14" cy="17" r="12" fill="#fbbc04" />
              <path d="M3.600 11a12 12 0 0 1 20.800 0H14L8.800 20z" fill="#e33b2e" />
              <path d="M3.600 11a12 12 0 0 0 9 18L18 21l-4-4-5.200 3z" fill="#2da94f" />
              <circle cx="14" cy="17" r="5.600" fill="#fff" /><circle cx="14" cy="17" r="4.400" fill="#3b7ded" />
              <circle cx="23" cy="8" r="7" fill="#b5c3d6" /><path d="M17 11a7 7 0 0 0 12 0z" fill="#79c4c4" /><path d="M21 4l1.500 2h2L26 4v5l-1 4h-3l-1-4z" fill="#c9ab8c" />
            </svg>
          </TaskButton>
          <TaskButton $mark="dot" aria-label="Spotify"><svg width="22" height="22" viewBox="0 0 22 22" fill="none" stroke="#1b2a1e" strokeLinecap="round"><circle cx="11" cy="11" r="11" fill="#1ed760" stroke="none" /><path d="M4.500 7.500c4.500-1.300 9-.9 13 1.200" strokeWidth="2" /><path d="M5 11.200c4-1 7.500-.6 11 1.200" strokeWidth="1.700" /><path d="M5.500 14.500c3.200-.7 6-.4 9 1.200" strokeWidth="1.400" /></svg></TaskButton>
          <TaskButton $mark="line" aria-label="Excel"><ExcelLogo size={22} /></TaskButton>
        </Apps>
        <Tray>
          <IconButton $w={33} aria-label="Hidden icons"><Chevron up size={11} width={1.1} /></IconButton>
          <IconButton $w={28} aria-label="Sync">
            <svg width="18" height="18" viewBox="0 0 18 18" fill="none" stroke="#ddd" strokeWidth="1.200"><path d="M2 7a7 7 0 0 1 13-2M15.500 1.500V5.500h-4M9 16a7 7 0 0 1-6-4M2 16v-4.500h4" /><circle cx="13" cy="13" r="4.500" fill="#1583e0" stroke="none" /></svg>
          </IconButton>
          <IconButton $w={46} $h={34}>ENG<br />US</IconButton>
          <IconButton $w={26} aria-label="Wi-Fi"><svg width="16" height="14" viewBox="0 0 16 14" fill="none" stroke="#fff" strokeWidth="1.400"><path d="M1 5a10 10 0 0 1 14 0M3.300 7.700a6.600 6.600 0 0 1 9.400 0M5.600 10a3.500 3.500 0 0 1 4.800 0" /><circle cx="8" cy="12" r="1" fill="#fff" /></svg></IconButton>
          <IconButton $w={20} aria-label="Volume"><svg width="17" height="14" viewBox="0 0 17 14" fill="none" stroke="#fff" strokeWidth="1.200"><path d="M1 5h2.500L7 1.500v11L3.500 9H1zM9.500 5c1 1.200 1 2.800 0 4M11.800 3c2 2.200 2 5.800 0 8M14 1.500c3 3 3 8 0 11" /></svg></IconButton>
          <IconButton $w={24} aria-label="Battery"><svg width="16" height="15" viewBox="0 0 16 15" fill="none" stroke="#fff" strokeWidth="1.200"><path d="M5 4h8.500v9h-12V9" /><path d="M5 6.500h6.500V11h-8z" fill="#fff" /><path d="M15 7v3" strokeWidth="2" /><path d="M4 0L1 5h2L2 8.500 5.500 4H3.500z" fill="#fff" stroke="none" /></svg></IconButton>
          <Clock>9:15 AM<br />2025-11-13</Clock>
          <IconButton $w={18} aria-label="Notifications">
            <svg width="16" height="17" viewBox="0 0 16 17"><path d="M1 13l1.500-2V6a4.500 4.500 0 0 1 6-4v3h3.500v6l1.500 2zM5 14h5a2.500 2.500 0 0 1-5 0z" fill="#fff" /><path d="M5 6.500h3.500L5 10.500h3.500" stroke="#222" fill="none" /><path d="M11 .800h3.500L11.500 4h3.500" stroke="#fff" fill="none" /></svg>
          </IconButton>
        </Tray>
      </Taskbar>
    </Page>
  );
}
